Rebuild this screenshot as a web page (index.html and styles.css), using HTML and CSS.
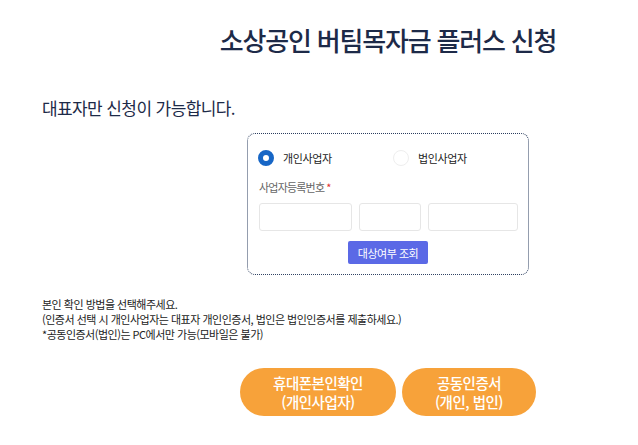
FILE: index.html
```html
<!DOCTYPE html>
<html lang="ko">

<head>
    <meta charset="UTF-8">
    <meta name="viewport" content="width=device-width, initial-scale=1.0">
    <title>소상공인 버팀목자금 플러스 신청</title>
    <link rel="stylesheet" href="styles.css">
</head>

<body>
    <div class="page">
        <!-- 제목 -->
        <div class="center">
            <h1 class="title">소상공인 버팀목자금 플러스 신청</h1>
        </div>

        <p class="lead">대표자만 신청이 가능합니다.</p>

        <!-- 사업자 조회 -->
        <div class="center">
            <div class="form-box">
                <div class="radios">
                    <label class="radio checked"><span class="dot"></span>개인사업자</label>
                    <label class="radio"><span class="dot"></span>법인사업자</label>
                </div>
                <div class="label">사업자등록번호<span class="req">*</span></div>
                <div class="inputs">
                    <input type="text" class="in1">
                    <input type="text" class="in2">
                    <input type="text" class="in3">
                </div>
                <div class="btn-row">
                    <button class="btn-check">대상여부 조회</button>
                </div>
            </div>
        </div>

        <div class="notes">
            <p>본인 확인 방법을 선택해주세요.</p>
            <p>(인증서 선택 시 개인사업자는 대표자 개인인증서, 법인은 법인인증서를 제출하세요.)</p>
            <p>*공동인증서(법인)는 PC에서만 가능(모바일은 불가)</p>
        </div>

        <!-- 본인확인 버튼 -->
        <div class="center">
            <div class="auth">
                <button class="btn-auth phone"><span>휴대폰본인확인</span><span>(개인사업자)</span></button>
                <button class="btn-auth cert"><span>공동인증서</span><span>(개인, 법인)</span></button>
            </div>
        </div>
    </div>
</body>

</html>
```

FILE: styles.css
```css
* {
    margin: 0;
    padding: 0;
    box-sizing: border-box;
}

body {
    background-color: #fff;
    font-family: "Noto Sans CJK KR", "Noto Sans", sans-serif;
    color: #222;
}

.page {
    width: 638px;
    padding-top: 20px;
}

.center {
    display: flex;
    justify-content: center;
    width: 496px;
    margin-left: 140px;
}

.title {
    font-size: 26px;
    font-weight: 500;
    letter-spacing: -1.2px;
    line-height: 40px;
    color: #1d2a48;
}

.lead {
    margin: 37px 0 14px 42px;
    font-size: 17px;
    letter-spacing: -0.6px;
    line-height: 22px;
    color: #1d2a48;
}

.form-box {
    width: 282px;
    padding: 16px 10px 10px 10px;
    border: 1px dotted #2b3d5e;
    border-radius: 8px;
}

.radios {
    display: flex;
    align-items: center;
    height: 16px;
}

.radio {
    display: flex;
    align-items: center;
    gap: 9px;
    font-size: 11px;
    letter-spacing: -0.4px;
    color: #222;
}

.radio:first-child {
    width: 135px;
}

.radio .dot {
    width: 16px;
    height: 16px;
    border-radius: 50%;
    border: 1px solid #eee;
    background-color: #fff;
}

.radio.checked .dot {
    border: 5px solid #1766c6;
}

.label {
    margin-top: 13px;
    padding-left: 1px;
    font-size: 11px;
    letter-spacing: -0.8px;
    line-height: 16px;
    color: #666;
}

.req {
    color: #e0302b;
    margin-left: 2px;
}

.inputs {
    display: flex;
    gap: 7px;
    margin-top: 8px;
    padding-left: 1px;
}

.inputs input {
    height: 28px;
    border: 1px solid #e6e6e6;
    border-radius: 3px;
    background-color: #fff;
}

.in1 {
    width: 93px;
}

.in2 {
    width: 62px;
}

.in3 {
    width: 90px;
}

.btn-row {
    display: flex;
    justify-content: center;
    margin-top: 10px;
}

.btn-check {
    width: 80px;
    height: 23px;
    border: 0;
    border-radius: 2px;
    background-color: #5b69e6;
    color: #fff;
    font-family: inherit;
    font-size: 11px;
    letter-spacing: -0.5px;
}

.notes {
    margin: 22px 0 0 42px;
    font-size: 11px;
    letter-spacing: -0.5px;
    line-height: 15px;
    color: #222;
}

.auth {
    display: flex;
    gap: 6px;
    margin-top: 26px;
}

.btn-auth {
    display: flex;
    flex-direction: column;
    justify-content: center;
    align-items: center;
    height: 48px;
    border: 0;
    border-radius: 24px;
    background-color: #f7a23a;
    color: #fff;
    font-family: inherit;
    font-size: 14.5px;
    font-weight: 500;
    letter-spacing: -0.5px;
}

.btn-auth span {
    display: block;
    line-height: 19px;
}

.phone {
    width: 156px;
}

.cert {
    width: 134px;
}
```
